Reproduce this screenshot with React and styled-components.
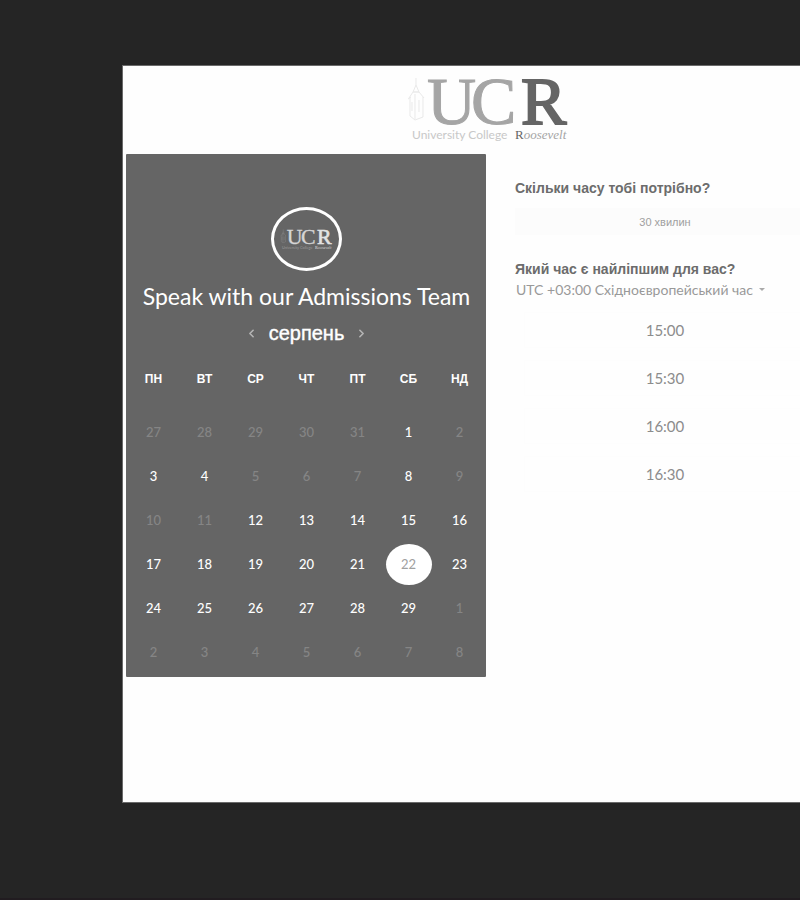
import React, { useState } from "react";
import styled, { createGlobalStyle } from "styled-components";
import { ChevronLeft, ChevronRight } from "lucide-react";

const GlobalStyle = createGlobalStyle`
  * { box-sizing: border-box; }
  body {
    margin: 0;
    background: #252525;
    font-family: Lato, "Liberation Sans", sans-serif;
  }
  button, select { font-family: inherit; }
`;

const Page = styled.div`
  min-height: 100vh;
  padding: 66px 0 96px 123px;
  overflow: hidden;
  border-bottom: 2px solid #211c20;
  display: flex;
`;

const Dialog = styled.main`
  flex: 1;
  min-width: 0;
  margin-right: -57px;
  padding: 0 4px 0 3px;
  background: #fefefe;
  outline: 1px solid #6a6a6a;
`;

const Header = styled.header`
  height: 88px;
  padding-top: 8px;
  display: flex;
  justify-content: center;
`;

const Columns = styled.div`
  display: grid;
  grid-template-columns: 360fr 367fr;
  align-items: start;
`;

const Calendar = styled.section`
  padding: 53px 1px 3px 2px;
  background: #656565;
  border-radius: 1px;
  color: #fff;
  display: flex;
  flex-direction: column;
  align-items: center;
`;

const Avatar = styled.div`
  width: 71px;
  height: 64px;
  border: 3px solid #fff;
  border-radius: 50%;
  display: flex;
  align-items: center;
  justify-content: center;
`;

const Title = styled.h1`
  margin: 12px 0;
  font-size: 23px;
  line-height: 26px;
  font-weight: 400;
  white-space: nowrap;
`;

const MonthRow = styled.div`
  height: 24px;
  display: flex;
  align-items: center;
  gap: 9px;
`;

const MonthName = styled.h2`
  margin: 0;
  font: 400 20px/24px "Liberation Sans", sans-serif;
  -webkit-text-stroke: 0.4px currentColor;
`;

const MonthButton = styled.button`
  width: 16px;
  height: 24px;
  padding: 0;
  border: 0;
  background: none;
  color: #b4b4b4;
  display: flex;
  align-items: center;
  justify-content: center;
`;

const DayTable = styled.table`
  width: 100%;
  table-layout: fixed;
  border-collapse: collapse;
`;

const Weekday = styled.th`
  height: 65px;
  padding: 2px 0 0;
  font: 700 12px/16px "Liberation Sans", sans-serif;
`;

const DayCell = styled.td`
  height: 44px;
  padding: 0;
`;

const Day = styled.button`
  width: 46px;
  height: 41px;
  margin: 0 auto;
  padding: 0;
  display: block;
  border: 0;
  border-radius: 50%;
  background: ${(p) => (p.$selected ? "#fff" : "transparent")};
  color: ${(p) => (p.$selected ? "#a0a0a0" : "#fff")};
  font-size: 13px;
  line-height: 16px;
  font-weight: ${(p) => (p.$selected ? 400 : 500)};
  &:disabled { color: #858585; }
`;

const Booking = styled.section`
  padding: 24px 38px 0 29px;
`;

const Question = styled.h2`
  display: block;
  margin: 0;
  font: 700 14px/20px "Liberation Sans", sans-serif;
  color: #6c6c6c;
`;

const Duration = styled.button`
  width: 100%;
  height: 27px;
  margin: 10px 0 24px;
  padding: 0;
  border: 0;
  background: #fcfcfc;
  color: #a0a0a0;
  font: 400 11px/16px "Liberation Sans", sans-serif;
`;

const ZoneField = styled.div`
  display: flex;
  align-items: center;
  height: 22px;
`;

const ZoneSelect = styled.select`
  appearance: none;
  margin: 0;
  padding: 0 14px 0 1px;
  border: 0;
  background: none;
  color: #999;
  font: 400 14px/20px Lato, "Liberation Sans", sans-serif;
`;

const Caret = styled.svg`
  width: 6px;
  height: 4px;
  margin-left: -8px;
  pointer-events: none;
`;

const Slots = styled.div`
  margin-top: 11px;
  padding: 0 9px;
  display: grid;
  gap: 12px;
`;

const Slot = styled.button`
  height: 36px;
  padding: 0;
  border: 1px solid #fdfdfd;
  background: #fefefe;
  color: #8c8c8c;
  font-size: 15px;
  line-height: 20px;
`;

const LogoImage = styled.svg`
  display: block;
  overflow: visible;
`;

function Tower({ color }) {
  return (
    <path
      fill="none"
      stroke={color}
      d="M10 4v7M10 11l-3 7h6l-3-7M3 24l4-6h6l5 6M4 24v18M9 20v25M17 23v20M2 25l3-2M4 42l5 4 8-3M6 28v9M13 26v12"
    />
  );
}

function Logo({ width, height, letters, strong, tower, caption }) {
  return (
    <LogoImage width={width} height={height} viewBox="0 0 168 68" role="img" aria-label="UCR University College Roosevelt">
      <Tower color={tower} />
      <g fontFamily="'Liberation Serif', serif" fontSize="68">
        <text x="21" y="50" fill={letters} stroke={letters} strokeWidth="1">U</text>
        <text x="65" y="50" fill={letters} stroke={letters} strokeWidth="1">C</text>
        <text x="115" y="50" fill={strong} stroke={strong} strokeWidth="2">R</text>
      </g>
      <text x="6" y="65" fill={caption} fontFamily="Lato, sans-serif" fontSize="12">University College</text>
      <text x="109" y="65" fill={strong} fontFamily="'Liberation Serif', serif" fontSize="13">
        R<tspan fontStyle="italic" fill={letters}>oosevelt</tspan>
      </text>
    </LogoImage>
  );
}

const weekdays = ["ПН", "ВТ", "СР", "ЧТ", "ПТ", "СБ", "НД"];
const weeks = [
  [27, 28, 29, 30, 31, 1, 2],
  [3, 4, 5, 6, 7, 8, 9],
  [10, 11, 12, 13, 14, 15, 16],
  [17, 18, 19, 20, 21, 22, 23],
  [24, 25, 26, 27, 28, 29, 1],
  [2, 3, 4, 5, 6, 7, 8],
];
const open = ["0000010", "1100010", "0011111", "1111111", "1111110", "0000000"];
const times = ["15:00", "15:30", "16:00", "16:30"];

export default function App() {
  const [selected, setSelected] = useState("3-5");
  return (
    <Page>
      <GlobalStyle />
      <Dialog>
        <Header>
          <Logo width={168} height={68} letters="#a5a5a5" strong="#656565" tower="#e9e9e9" caption="#c8c8c8" />
        </Header>
        <Columns>
          <Calendar>
            <Avatar>
              <Logo width={54} height={22} letters="#d6d6d6" strong="#e2e2e2" tower="#929292" caption="#999" />
            </Avatar>
            <Title>Speak with our Admissions Team</Title>
            <MonthRow>
              <MonthButton aria-label="Попередній місяць"><ChevronLeft size={13} strokeWidth={3} /></MonthButton>
              <MonthName>серпень</MonthName>
              <MonthButton aria-label="Наступний місяць"><ChevronRight size={13} strokeWidth={3} /></MonthButton>
            </MonthRow>
            <DayTable>
              <thead>
                <tr>{weekdays.map((d) => <Weekday key={d} scope="col">{d}</Weekday>)}</tr>
              </thead>
              <tbody>
                {weeks.map((week, w) => (
                  <tr key={w}>
                    {week.map((day, d) => {
                      const id = `${w}-${d}`;
                      return (
                        <DayCell key={id}>
                          <Day
                            $selected={selected === id}
                            aria-pressed={selected === id}
                            disabled={open[w][d] === "0"}
                            onClick={() => setSelected(id)}
                          >
                            {day}
                          </Day>
                        </DayCell>
                      );
                    })}
                  </tr>
                ))}
              </tbody>
            </DayTable>
          </Calendar>
          <Booking>
            <Question>Скільки часу тобі потрібно?</Question>
            <Duration>30 хвилин</Duration>
            <Question as="label" htmlFor="zone">Який час є найліпшим для вас?</Question>
            <ZoneField>
              <ZoneSelect id="zone">
                <option>UTC +03:00 Східноєвропейський час</option>
              </ZoneSelect>
              <Caret viewBox="0 0 6 4" aria-hidden="true"><path d="M0 0h6L3 3z" fill="#aaa" /></Caret>
            </ZoneField>
            <Slots>
              {times.map((t) => <Slot key={t}>{t}</Slot>)}
            </Slots>
          </Booking>
        </Columns>
      </Dialog>
    </Page>
  );
}
